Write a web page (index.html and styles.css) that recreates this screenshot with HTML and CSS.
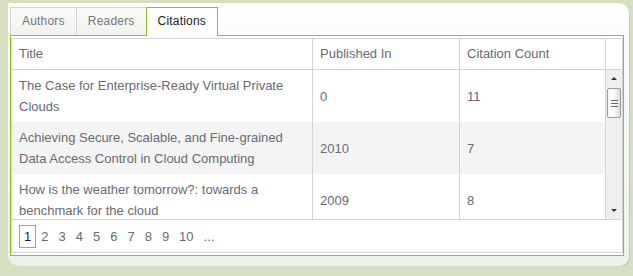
FILE: index.html
```html
<!DOCTYPE html>
<html lang="en">
<head>
  <meta charset="UTF-8">
  <title>Citations</title>
  <link rel="stylesheet" href="styles.css">
</head>
<body>
  <div class="panel">
    <ul class="tabs">
      <li class="tab">Authors</li>
      <li class="tab">Readers</li>
      <li class="tab active">Citations</li>
    </ul>
    <div class="tab-body">
      <div class="grid">
        <div class="grid-head">
          <div class="cell c-title">Title</div>
          <div class="cell c-pub">Published In</div>
          <div class="cell c-count">Citation Count</div>
          <div class="cell c-scroll"></div>
        </div>
        <div class="grid-body">
          <div class="rows">
            <div class="row">
              <div class="cell c-title">The Case for Enterprise-Ready Virtual Private Clouds</div>
              <div class="cell c-pub">0</div>
              <div class="cell c-count">11</div>
            </div>
            <div class="row alt">
              <div class="cell c-title">Achieving Secure, Scalable, and Fine-grained Data Access Control in Cloud Computing</div>
              <div class="cell c-pub">2010</div>
              <div class="cell c-count">7</div>
            </div>
            <div class="row">
              <div class="cell c-title">How is the weather tomorrow?: towards a benchmark for the cloud</div>
              <div class="cell c-pub">2009</div>
              <div class="cell c-count">8</div>
            </div>
          </div>
          <div class="scrollbar">
            <div class="arrow up"></div>
            <div class="thumb"><span></span><span></span><span></span></div>
            <div class="spacer"></div>
            <div class="arrow down"></div>
          </div>
        </div>
        <div class="pager">
          <a class="page current">1</a>
          <a class="page">2</a>
          <a class="page">3</a>
          <a class="page">4</a>
          <a class="page">5</a>
          <a class="page">6</a>
          <a class="page">7</a>
          <a class="page">8</a>
          <a class="page">9</a>
          <a class="page">10</a>
          <a class="page">...</a>
        </div>
      </div>
    </div>
  </div>
</body>
</html>
```

FILE: styles.css
```css
body {
  margin: 0;
  background: #d6dfc1;
  font-family: "Liberation Sans", Arial, sans-serif;
  font-size: 13px;
  color: #6a6a74;
}

.panel {
  width: 614px;
  height: 259px;
  margin: 3px 0 0 8px;
  padding: 4px 5px 0 2px;
  background: linear-gradient(to bottom, #ffffff, #fbfbf9 30px, #eef1e7);
  border-radius: 0 10px 10px 10px;
  box-shadow: 1px 1px 1px #c4cab3;
}

.tabs {
  list-style: none;
  margin: 0;
  padding: 0;
  display: flex;
  align-items: flex-start;
  height: 28px;
}

.tab {
  height: 27px;
  line-height: 27px;
  padding: 0 11px;
  border: 1px solid #d6d6d6;
  border-bottom: none;
  margin-left: -1px;
  background: linear-gradient(to bottom, #fafaf8, #f1f1ee);
  font-size: 12px;
  letter-spacing: 0.2px;
  color: #777;
}

.tab:first-child {
  margin-left: 0;
}

.tab.active {
  position: relative;
  z-index: 1;
  height: 28px;
  border-color: #92c01e;
  background: #fff;
  color: #222;
}

.tab-body {
  border: 1px solid #92c01e;
  padding: 2px 0;
  background: #fff;
}

.grid {
  border: 1px solid #d4d4d4;
}

.grid-head {
  display: flex;
  height: 30px;
  line-height: 30px;
  border-bottom: 1px solid #d4d4d4;
}

.cell {
  padding: 0 7px;
  border-right: 1px solid #d4d4d4;
}

.c-title {
  width: 286px;
}

.c-pub {
  width: 132px;
}

.c-count {
  width: 131px;
}

.c-scroll {
  width: 16px;
  padding: 0;
  border-right: none;
}

.grid-body {
  display: flex;
  height: 149px;
}

.rows {
  width: 594px;
  overflow: hidden;
}

.row {
  display: flex;
  height: 52px;
  flex-shrink: 0;
}

.row .cell {
  display: flex;
  align-items: center;
  line-height: 21px;
}

.row.alt {
  background: #f4f4f4;
}

.scrollbar {
  width: 16px;
  background: #efefef;
  display: flex;
  flex-direction: column;
  align-items: center;
}

.arrow {
  width: 0;
  height: 0;
  border-left: 3px solid transparent;
  border-right: 3px solid transparent;
}

.arrow.up {
  margin: 7px 0 8px;
  border-bottom: 3px solid #333;
}

.arrow.down {
  margin: 0 0 7px;
  border-top: 3px solid #333;
}

.thumb {
  width: 12px;
  height: 28px;
  border: 1px solid #9a9a9a;
  border-radius: 2px;
  background: linear-gradient(to right, #f4f4f4, #ffffff 40%, #dcdcdc);
  display: flex;
  flex-direction: column;
  align-items: center;
  justify-content: center;
  gap: 2px;
}

.thumb span {
  width: 7px;
  height: 1px;
  background: #666;
}

.spacer {
  flex: 1;
}

.pager {
  display: flex;
  align-items: center;
  height: 32px;
  padding-left: 7px;
  border-top: 1px solid #d4d4d4;
}

.page {
  padding: 0 4px;
  border: 1px solid transparent;
  line-height: 21px;
  color: #6a6a74;
}

.page.current {
  border-color: #92c01e;
  color: #1c1c3a;
}
```
